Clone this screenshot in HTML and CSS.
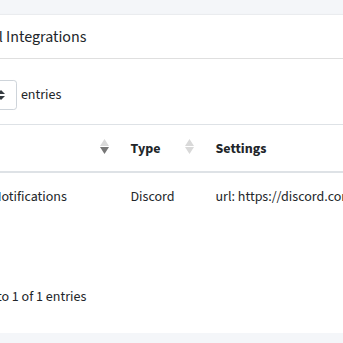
FILE: index.html
```html
<!DOCTYPE html>
<html lang="en">
<head>
    <meta charset="UTF-8">
    <title>Notification Settings</title>
    <link rel="stylesheet" href="styles.css">
</head>
<body>
    <div class="content">
        <div class="card">
            <div class="card-header">
                <h3 class="card-title">Additional Integrations</h3>
            </div>
            <div class="card-body">
                <div class="dt-length">
                    <label>Show
                        <span class="select">10
                            <svg class="select-arrow" viewBox="0 0 4 5" width="8" height="10"><path d="M2 0L0 2h4zm0 5L0 3h4z" fill="#343a40"/></svg>
                        </span>
                        entries</label>
                </div>

                <table class="table">
                    <thead>
                        <tr>
                            <th class="col-name">Name
                                <span class="sort">
                                    <svg viewBox="0 0 9 7" width="9" height="7"><path d="M4.5 0L9 7H0z" fill="#d9d9d9"/></svg>
                                    <svg viewBox="0 0 9 7" width="9" height="7"><path d="M0 0h9L4.5 7z" fill="#777"/></svg>
                                </span>
                            </th>
                            <th class="col-type">Type
                                <span class="sort">
                                    <svg viewBox="0 0 9 7" width="9" height="7"><path d="M4.5 0L9 7H0z" fill="#d9d9d9"/></svg>
                                    <svg viewBox="0 0 9 7" width="9" height="7"><path d="M0 0h9L4.5 7z" fill="#d9d9d9"/></svg>
                                </span>
                            </th>
                            <th class="col-settings">Settings</th>
                        </tr>
                    </thead>
                    <tbody>
                        <tr>
                            <td>Discord Notifications</td>
                            <td>Discord</td>
                            <td>url: https://discord.com/api/webhooks/10293847</td>
                        </tr>
                    </tbody>
                </table>

                <div class="dt-info">Showing 1 to 1 of 1 entries</div>
            </div>
        </div>
    </div>
</body>
</html>
```
FILE: styles.css
```css
html {
    overflow: hidden;
}
body {
    margin: 0;
    background: #f4f6f9;
    color: #212529;
    font-family: "Source Sans 3", Lato, sans-serif;
    font-size: 14px;
    line-height: 1.5;
}
.content {
    padding-top: 15px;
}
.card {
    width: 720px;
    margin-left: -84px;
    background: #fff;
    border-radius: 3.5px;
    box-shadow: 0 0 1px rgba(0, 0, 0, .125), 0 1px 3px rgba(0, 0, 0, .2);
}
.card-header {
    padding: 13px 17.5px 11px;
    border-bottom: 1px solid rgba(0, 0, 0, .125);
}
.card-title {
    margin: 0;
    font-size: 16px;
    font-weight: 400;
    line-height: 1.2;
}
.card-body {
    padding: 21px 17.5px 24.5px;
}
.dt-length label {
    display: inline-flex;
    align-items: center;
    gap: 4px;
}
.select {
    position: relative;
    display: inline-flex;
    align-items: center;
    height: 30px;
    box-sizing: border-box;
    padding: 0 25.5px 0 7px;
    border: 1px solid #ced4da;
    border-radius: 3.2px;
    font-size: 12.25px;
}
.select-arrow {
    position: absolute;
    right: 10.5px;
    top: 9px;
}
.table {
    width: 100%;
    margin-top: 14px;
    border-collapse: collapse;
    table-layout: fixed;
}
.table th,
.table td {
    padding: 12px;
    line-height: 24px;
    text-align: left;
    vertical-align: top;
    white-space: nowrap;
    overflow: hidden;
}
.table th {
    position: relative;
    padding-bottom: 10px;
    border-top: 1px solid #dee2e6;
    border-bottom: 2px solid #dee2e6;
    font-weight: 700;
}
.col-name {
    width: 161px;
}
.col-type {
    width: 61px;
}
.sort {
    position: absolute;
    right: 10px;
    top: 14px;
    display: flex;
    flex-direction: column;
    gap: 1px;
}
.sort svg {
    display: block;
}
.dt-info {
    margin-top: 66px;
}
```
